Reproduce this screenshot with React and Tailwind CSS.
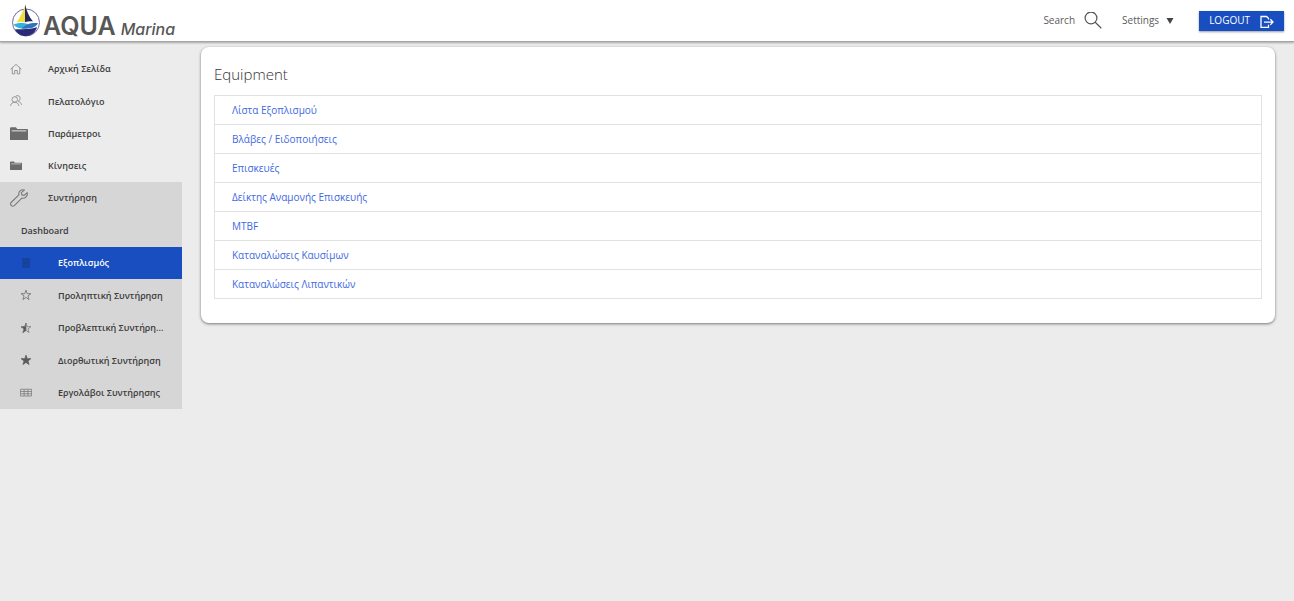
const mainItems = [
  { label: "Αρχική Σελίδα", icon: HomeIcon },
  { label: "Πελατολόγιο", icon: UsersIcon },
  { label: "Παράμετροι", icon: FolderIcon, large: true },
  { label: "Κίνησεις", icon: FolderIcon },
];

const maintenanceItems = [
  { label: "Εξοπλισμός", icon: ListIcon, active: true },
  { label: "Προληπτική Συντήρηση", icon: StarIcon },
  { label: "Προβλεπτική Συντήρη...", icon: HalfStarIcon },
  { label: "Διορθωτική Συντήρηση", icon: FullStarIcon },
  { label: "Εργολάβοι Συντήρησης", icon: TableIcon },
];

const equipmentLinks = [
  "Λίστα Εξοπλισμού",
  "Βλάβες / Ειδοποιήσεις",
  "Επισκευές",
  "Δείκτης Αναμονής Επισκευής",
  "MTBF",
  "Καταναλώσεις Καυσίμων",
  "Καταναλώσεις Λιπαντικών",
];

const starPath = "M8 1.500l1.600 4.700h5L10.600 9.200l1.500 4.900L8 11.200l-4.100 2.900 1.500-4.900L1.400 6.200h5z";

function HomeIcon({ className }) {
  return (
    <svg viewBox="0 0 16 16" className={className} fill="none" stroke="#8d8d8d" strokeWidth="1.200">
      <path d="M.8 8.300 8 1.800l7.200 6.500M3 6.800v7.700h3.300v-4.500h3.400v4.500H13V6.800" />
    </svg>
  );
}

function UsersIcon({ className }) {
  return (
    <svg viewBox="0 0 16 16" className={className} fill="none" stroke="#8d8d8d" strokeWidth="1.200">
      <circle cx="6.300" cy="6" r="3.700" />
      <path d="M.8 14.500c.3-3 2.500-4.800 5.500-4.800s5.200 1.800 5.500 4.800M7.500 1.800c1.500-1.500 4.800-1.300 5.700 1.200.8 2.200-.2 4.500-2.300 5.500 2.500.5 4 2 4.500 4.700" />
    </svg>
  );
}

function FolderIcon({ className }) {
  return (
    <svg viewBox="0 0 16 16" className={className} fill="#6b6b6b">
      <path d="M0 3c0-.6.300-.9.900-.9h4.300l1.300 1.400h8.600c.5 0 .9.300.9.900v9H0z" />
      <path d="M1.500 5.200h13" stroke="#d8d8d8" />
    </svg>
  );
}

function WrenchIcon({ className }) {
  return (
    <svg viewBox="0 0 16 16" className={className} fill="none" stroke="#7a7a7a" strokeLinejoin="round">
      <path d="M12.800.9c-3-1-5.600 1.400-4.900 4.400L1 12c-1.500 1.700.9 4.300 2.800 2.800l6.700-6.700c3 .7 5.600-1.900 4.700-4.900l-2.500 2.500-2.200-.5-.4-2z" />
    </svg>
  );
}

function ListIcon({ className }) {
  return (
    <svg viewBox="0 0 16 16" className={className} fill="none" stroke="#173f91" strokeWidth="1.800">
      <path d="M2.700 3h10.600M2.700 5.500h10.600M2.700 8h10.600M2.700 10.500h10.600M2.700 13h10.600" />
    </svg>
  );
}

function StarIcon({ className }) {
  return (
    <svg viewBox="0 0 16 16" className={className} fill="none" stroke="#666">
      <path d={starPath} />
    </svg>
  );
}

function HalfStarIcon({ className }) {
  return (
    <svg viewBox="0 0 16 16" className={className} fill="none" stroke="#777">
      <path d={starPath} />
      <path d="M8 1.500v9.700l-4.100 2.900 1.500-4.900L1.400 6.200h5z" fill="#555" />
    </svg>
  );
}

function FullStarIcon({ className }) {
  return (
    <svg viewBox="0 0 16 16" className={className} fill="#5c5c5c" stroke="#5c5c5c">
      <path d={starPath} />
    </svg>
  );
}

function TableIcon({ className }) {
  return (
    <svg viewBox="0 0 16 16" className={className} fill="none" stroke="#777">
      <path d="M.5 3h15v9H.5zM.5 6h15M.5 9h15M5.500 3v9M10.500 3v9" />
    </svg>
  );
}

function LogoMark() {
  return (
    <svg viewBox="0 0 30 34" className="h-[34px] w-[30px] shrink-0" aria-hidden="true">
      <circle cx="15" cy="18.500" r="13.500" fill="#fff" stroke="#6767a8" strokeWidth="1" />
      <path d="M14 1.500C12 8 9 13.500 5.500 18.500c3-1 6-1 8.500-.2z" fill="#f2dc3c" />
      <path d="M14 .2c1.500 6.500 4 12.300 8 17.300-2.600-.4-5.400-.2-8 .8z" fill="#26265f" />
      <path d="M2.500 20.500c4-2 9.500-2.200 15.500-.2-3 .8-5.300 2.500-6.300 4.200C8 24.500 4.500 23.300 2.500 20.500z" fill="#30b4dd" />
      <path d="M10.500 25c3.500-5 9-6.500 16.500-6-.8 2.300-3.500 4.600-7.500 5.300-3.300.6-6 .2-9 .7z" fill="#2f75bd" />
      <path d="M4 25.500c6-.5 15 .3 22-2.500C24.500 28.500 20.500 32 15 32S6 29.500 4 25.500z" fill="#2b2b78" />
    </svg>
  );
}

function SearchIcon() {
  return (
    <svg viewBox="0 0 18 18" className="size-[18px]" fill="none" stroke="#555" strokeWidth="1.200">
      <circle cx="7" cy="6" r="5.900" />
      <path d="M11.200 10.300 17.300 16.200" />
    </svg>
  );
}

function CaretIcon() {
  return (
    <svg viewBox="0 0 8 6" className="h-[6px] w-[8px]" fill="#444">
      <path d="M.5 0h7L4 6z" />
    </svg>
  );
}

function LogoutIcon() {
  return (
    <svg viewBox="0 0 14 14" className="size-[14px]" fill="none" stroke="currentColor" strokeWidth="1.300">
      <path d="M8.500 5.500V4.300L6.500 2.500H1v11h7.500V10.700M4 8.100h9M10.300 5.300l2.700 2.800-2.700 2.800" />
    </svg>
  );
}

function Header() {
  return (
    <header className="relative z-10 flex h-[42px] items-center justify-between border-b border-[#a5a5a5] bg-white pr-[10px] pl-[11px] shadow-[0_1px_2px_rgba(0,0,0,0.3)]">
      <a href="#" className="flex items-center gap-[2px] text-[#575756]">
        <LogoMark />
        <span className="flex items-baseline gap-[5px] pt-[10px] font-['Inter',sans-serif]">
          <span className="text-[25px] leading-8 font-semibold">AQUA</span>
          <span className="text-[16px] font-medium italic">Marina</span>
        </span>
      </a>
      <div className="flex items-center text-[10px] text-[#5c5c5c]">
        <button className="flex items-center gap-[9px]">
          Search
          <SearchIcon />
        </button>
        <button className="ml-5 flex items-center gap-[7px]">
          Settings
          <CaretIcon />
        </button>
        <button className="ml-[25px] flex h-5 items-center gap-[10px] bg-[#184ebf] px-[10px] text-white shadow-[0_1px_2px_rgba(0,0,0,0.4)]">
          LOGOUT
          <LogoutIcon />
        </button>
      </div>
    </header>
  );
}

function Sidebar() {
  return (
    <nav className="w-[182px] shrink-0 pt-[11px] text-[9px] font-semibold text-[#3c3c3c]">
      <ul className="grid h-[129px] auto-rows-fr">
        {mainItems.map(({ label, icon: Icon, large }) => (
          <li key={label}>
            <a href="#" className="flex h-full items-center pl-[10px]">
              <span className="w-[38px]">
                <Icon className={large ? "size-[18px]" : "size-3"} />
              </span>
              {label}
            </a>
          </li>
        ))}
      </ul>
      <ul className="grid h-[227px] auto-rows-fr bg-[#d6d6d6]">
        <li>
          <a href="#" className="flex h-full items-center pl-[10px]">
            <span className="w-[38px]">
              <WrenchIcon className="size-[18px]" />
            </span>
            Συντήρηση
          </a>
        </li>
        <li>
          <a href="#" className="flex h-full items-center pl-[21px]">
            Dashboard
          </a>
        </li>
        {maintenanceItems.map(({ label, icon: Icon, active }) => (
          <li key={label} className={active ? "bg-[#184ebf] text-white" : ""}>
            <a href="#" className="flex h-full items-center pl-5">
              <span className="w-[38px] shrink-0">
                <Icon className="size-3" />
              </span>
              <span className="whitespace-nowrap">{label}</span>
            </a>
          </li>
        ))}
      </ul>
    </nav>
  );
}

export default function App() {
  return (
    <div className="min-h-screen bg-[#ececec] font-['Open_Sans','Noto_Sans',sans-serif]">
      <Header />
      <div className="flex">
        <Sidebar />
        <main className="min-w-0 flex-1 pt-[5px] pr-[19px] pl-[19px]">
          <section className="rounded-lg bg-white px-[13px] pt-[15px] pb-6 shadow-[0_1px_3px_rgba(0,0,0,0.5)]">
            <h1 className="text-[15px] leading-6 font-light text-[#333]">Equipment</h1>
            <ul className="mt-[9px] divide-y divide-[#e2e2e2] border border-[#e2e2e2]">
              {equipmentLinks.map((label) => (
                <li key={label}>
                  <a href="#" className="block px-[17px] text-[10px] leading-7 text-[#4169e1]">
                    {label}
                  </a>
                </li>
              ))}
            </ul>
          </section>
        </main>
      </div>
    </div>
  );
}
